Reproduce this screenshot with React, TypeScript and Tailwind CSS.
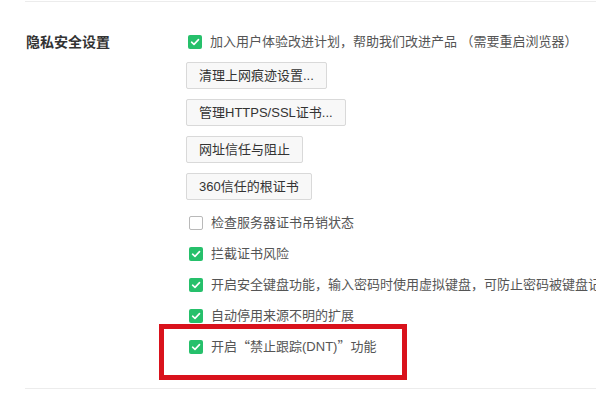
import React from "react";

const font = { fontFamily: '"Liberation Sans", "Noto Sans CJK SC", sans-serif' };
const cjk = { fontFamily: '"Noto Sans CJK SC", sans-serif' };

const Check = ({ checked }: { checked: boolean }) =>
  checked ? (
    <span className="flex h-[14px] w-[14px] shrink-0 items-center justify-center rounded-[2px] bg-[#26c06b]">
      <svg width="10" height="10" viewBox="0 0 10 10" fill="none">
        <path d="M1.6 5.2 L4 7.4 L8.5 2.6" stroke="#fff" strokeWidth="1.6" strokeLinecap="round" strokeLinejoin="round" />
      </svg>
    </span>
  ) : (
    <span className="h-[14px] w-[14px] shrink-0 rounded-[2px] border border-[#b9b9b9] bg-white" />
  );

const Btn = ({ label }: { label: string }) => (
  <button className="h-[27px] rounded-[2px] border border-[#d9d9d9] bg-[#f8f8f8] px-3 text-[13px] leading-none text-[#333]">
    {label}
  </button>
);

const options: { key: string; label: React.ReactNode; checked: boolean }[] = [
  { key: "crl", label: "检查服务器证书吊销状态", checked: false },
  { key: "risk", label: "拦截证书风险", checked: true },
  { key: "kbd", label: "开启安全键盘功能，输入密码时使用虚拟键盘，可防止密码被键盘记录", checked: true },
  { key: "ext", label: "自动停用来源不明的扩展", checked: true },
  {
    key: "dnt",
    label: (
      <>
        开启<span style={cjk}>“</span>禁止跟踪(DNT)<span style={cjk}>”</span>功能
      </>
    ),
    checked: true,
  },
];

export default function App() {
  return (
    <div className="relative h-[398px] w-[596px] overflow-hidden bg-white" style={font}>
      <div className="ml-[25px] mt-px border-t border-[#ececec]">
        <div className="flex pt-[30px]">
          <div className="w-[161px] shrink-0 pl-px">
            <div className="flex h-[20px] items-center text-[14px] font-bold text-[#333]">隐私安全设置</div>
          </div>
          <div className="min-w-0 flex-1">
            <label className="ml-[2px] flex h-[20px] items-center gap-[8px] whitespace-nowrap text-[13px] text-[#555]">
              <Check checked />
              <span>加入用户体验改进计划，帮助我们改进产品 （需要重启浏览器）</span>
            </label>
            <div className="mt-[10px] flex flex-col items-start gap-[10px]">
              <Btn label="清理上网痕迹设置..." />
              <Btn label="管理HTTPS/SSL证书..." />
              <Btn label="网址信任与阻止" />
              <Btn label="360信任的根证书" />
            </div>
            <div className="mt-[7px]">
              {options.map((o) => (
                <label
                  key={o.key}
                  className="ml-[3px] flex h-[31px] items-center gap-[8px] whitespace-nowrap text-[13px] text-[#555]"
                >
                  <Check checked={o.checked} />
                  <span>{o.label}</span>
                </label>
              ))}
            </div>
          </div>
        </div>
        <div className="mt-[26px] border-t border-[#ececec]" />
      </div>
      <div className="absolute left-[159px] top-[324px] h-[56px] w-[248px] border-[5px] border-[#d9121c]" />
    </div>
  );
}
